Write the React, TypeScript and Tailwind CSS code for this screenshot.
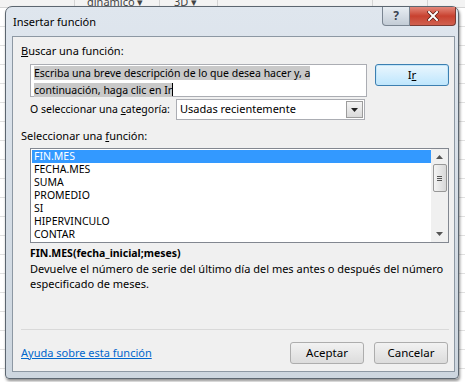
const font = { fontFamily: '"Noto Sans", "Open Sans", sans-serif' };

const funciones = ["FIN.MES", "FECHA.MES", "SUMA", "PROMEDIO", "SI", "HIPERVINCULO", "CONTAR"];

const Button = ({ children, className = "" }: { children: React.ReactNode; className?: string }) => (
  <button
    className={`h-[22px] w-[74px] rounded-[3px] border border-[#adadad] bg-gradient-to-b from-[#f2f2f2] to-[#dcdcdc] text-[11.5px] text-black ${className}`}
  >
    {children}
  </button>
);

const App = () => {
  return (
    <div className="relative h-[382px] w-[465px] overflow-hidden bg-white" style={font}>
      {/* hoja de cálculo de fondo */}
      <div className="flex h-[8px] border-b border-[#d4d4d4] bg-[#f3f3f3] text-[11px] leading-[4px] text-[#444]">
        <div className="w-[75px] border-r border-[#d4d4d4]" />
        <div className="w-[85px] border-r border-[#d4d4d4] pl-[12px]">dinámico ▾</div>
        <div className="w-[58px] border-r border-[#d4d4d4] pl-[14px]">3D ▾</div>
        <div className="w-[155px] border-r border-[#d4d4d4]" />
        <div className="w-[55px] border-r border-[#d4d4d4]" />
        <div className="flex-1" />
      </div>
      <div className="flex flex-col">
        {Array.from({ length: 20 }).map((_, i) => (
          <div key={i} className="h-[19px] border-b border-[#e0e0e0]" />
        ))}
      </div>

      {/* ventana del diálogo */}
      <div className="absolute left-[5px] top-[6px] flex h-[373px] w-[454px] flex-col rounded-t-[7px] rounded-b-[4px] border border-[#5c6670] bg-gradient-to-b from-[#dfe6ee] to-[#cdd6df] shadow-[1px_2px_3px_rgba(0,0,0,0.45)]">
        <div className="flex h-[29px] shrink-0 items-start justify-between">
          <div className="pl-[7px] pt-[8px] text-[11px] leading-[14px] text-black">Insertar función</div>
          <div className="mr-[2px] flex">
            <div className="flex h-[19px] w-[28px] items-center justify-center rounded-bl-[4px] border border-t-0 border-[#7a8591] bg-gradient-to-b from-[#e8edf2] to-[#c3ccd6] text-[12px] font-bold text-[#3a4450]">
              ?
            </div>
            <div className="flex h-[19px] w-[46px] items-center justify-center rounded-br-[4px] border border-l-0 border-t-0 border-[#7a3a32] bg-gradient-to-b from-[#e3877a] via-[#c8412f] to-[#d0604f]">
              <svg width="12" height="10" viewBox="0 0 12 10">
                <path d="M2 1 L10 9 M10 1 L2 9" stroke="#5a1a12" strokeWidth="3.4" strokeLinecap="square" />
                <path d="M2 1 L10 9 M10 1 L2 9" stroke="#ffffff" strokeWidth="2" strokeLinecap="square" />
              </svg>
            </div>
          </div>
        </div>

        <div className="mb-[6px] ml-[6px] mr-[3px] flex flex-1 flex-col border border-[#8d98a3] bg-[#f0f0f0] pl-[8px] pr-[6px] text-[11px] text-black">
          <div className="pt-[6px] leading-[16px]">
            <u>B</u>uscar una función:
          </div>

          <div className="mt-[5px] flex gap-[8px]">
            <div className="ml-[9px] h-[33px] w-[337px] shrink-0 border border-[#abadb3] bg-white px-[3px] pt-[1px] text-[10.5px] leading-[15px]">
              <span className="bg-[#c9c9c9]">Escriba una breve descripción de lo que desea hacer y, a</span>
              <br />
              <span className="bg-[#c9c9c9]">continuación, haga clic en Ir</span>
              <span className="inline-block h-[13px] w-px translate-y-[2px] bg-black" />
            </div>
            <button className="h-[22px] w-[74px] shrink-0 rounded-[3px] border border-[#3c7fb1] bg-gradient-to-b from-[#eaf6fd] to-[#bee6fd] text-[11.5px] text-black shadow-[inset_0_0_0_1px_#c2e6fa]">
              I<u>r</u>
            </button>
          </div>

          <div className="mt-[2px] flex items-center">
            <div className="ml-[9px] w-[146px] whitespace-nowrap text-[10.5px]">
              O seleccionar una <u>c</u>ategoría:
            </div>
            <div className="flex h-[21px] w-[189px] items-center justify-between border border-[#abadb3] bg-white pl-[3px] pr-px">
              <span>Usadas recientemente</span>
              <div className="flex h-[17px] w-[17px] items-center justify-center border border-[#9c9c9c] bg-gradient-to-b from-[#f4f4f4] to-[#dadada]">
                <svg width="7" height="4" viewBox="0 0 7 4">
                  <path d="M0 0 H7 L3.5 4 Z" fill="#222" />
                </svg>
              </div>
            </div>
          </div>

          <div className="mt-[8px] leading-[16px]">
            Seleccionar una <u>f</u>unción:
          </div>

          <div className="ml-[9px] mt-[4px] flex h-[95px] w-[419px] border border-[#828790] bg-white">
            <div className="flex flex-1 flex-col pl-px pt-px">
              {funciones.map((f, i) => (
                <div
                  key={f}
                  className={`h-[13px] pl-[2px] text-[10.5px] leading-[13px] ${i === 0 ? "bg-[#3399ff] text-white" : ""}`}
                >
                  {f}
                </div>
              ))}
            </div>
            <div className="flex w-[17px] flex-col items-center bg-[#f0f0f0]">
              <svg width="7" height="4" viewBox="0 0 7 4" className="mt-[6px]">
                <path d="M0 4 H7 L3.5 0 Z" fill="#555" />
              </svg>
              <div className="mt-[5px] flex h-[28px] w-[14px] flex-col items-center justify-center gap-[1px] rounded-[2px] border border-[#979797] bg-gradient-to-r from-[#f4f4f4] to-[#d8d8d8]">
                <div className="h-px w-[5px] bg-[#555]" />
                <div className="h-px w-[5px] bg-[#555]" />
                <div className="h-px w-[5px] bg-[#555]" />
              </div>
              <div className="flex-1" />
              <svg width="7" height="4" viewBox="0 0 7 4" className="mb-[6px]">
                <path d="M0 0 H7 L3.5 4 Z" fill="#555" />
              </svg>
            </div>
          </div>

          <div className="ml-[9px] mt-[2px] text-[10.5px] font-bold leading-[16px]">FIN.MES(fecha_inicial;meses)</div>
          <div className="ml-[9px] whitespace-nowrap leading-[15px]">
            Devuelve el número de serie del último día del mes antes o después del número
            <br />
            especificado de meses.
          </div>

          <div className="flex-1" />
          <div className="h-px w-[428px] bg-[#d9d9d9]" />

          <div className="mb-[7px] mt-[12px] flex items-center">
            <a className="text-[#0066cc] underline">Ayuda sobre esta función</a>
            <div className="flex-1" />
            <Button>Aceptar</Button>
            <Button className="ml-[10px]">Cancelar</Button>
          </div>
        </div>
      </div>
    </div>
  );
};

export default App;
